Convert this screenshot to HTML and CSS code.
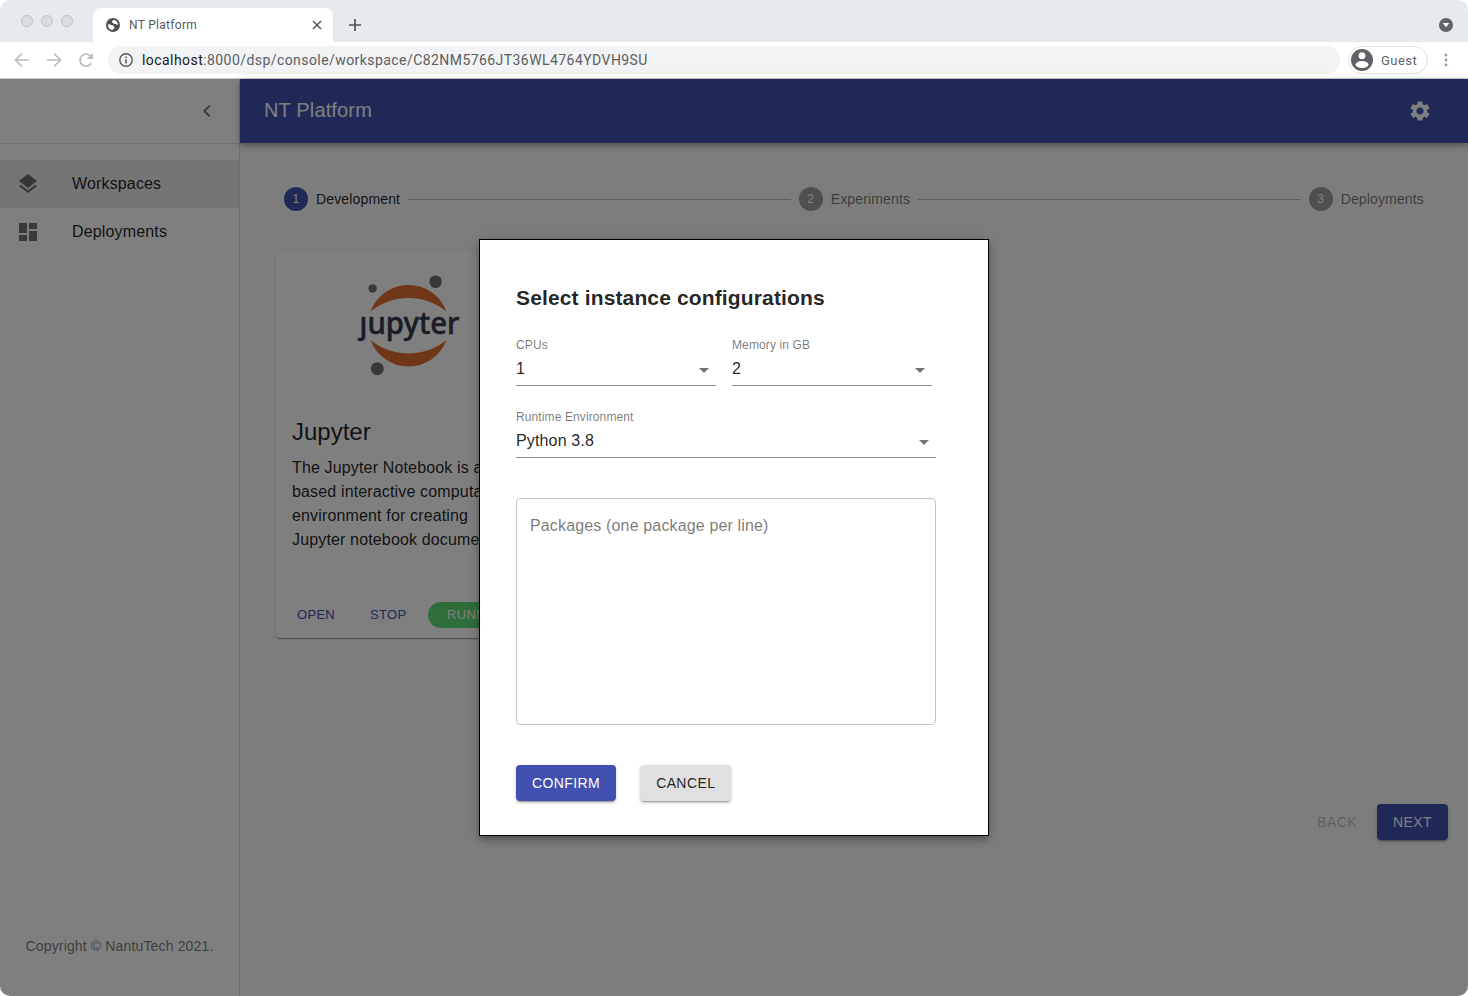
FILE: index.html
```html
<!DOCTYPE html>
<html lang="en">
<head>
<meta charset="utf-8">
<title>NT Platform</title>
<link rel="stylesheet" href="styles.css">
</head>
<body>
<div class="window">
  <div class="tabstrip">
    <div class="lights"><i></i><i></i><i></i></div>
    <div class="tab">
      <svg class="globe" viewBox="0 0 14 14"><circle cx="7" cy="7" r="7" fill="#4b4e52"/><path d="M2.100 6.300C4.600 5.700 5 7.500 6.700 7.300S7 9.200 8.300 9.300 7.600 11 6.600 11.900C4 12.200 1.800 9.800 2.100 6.300zM7.400 2C6.500 3 5.300 3.700 6.300 4.600S8 6.200 9.500 6.100 10.600 7 12 6.900C12 4.600 10.400 2 7.400 2z" fill="#fff"/></svg>
      <span class="tab-title">NT Platform</span>
      <svg class="close" viewBox="0 0 10 10"><path d="M1 1l8 8M9 1L1 9" stroke="#505357" stroke-width="1.500"/></svg>
    </div>
    <svg class="plus" viewBox="0 0 12 12"><path d="M6 0v12M0 6h12" stroke="#4f5256" stroke-width="1.700"/></svg>
    <svg class="tab-menu" viewBox="0 0 14 14"><circle cx="7" cy="7" r="7" fill="#5f6368"/><path d="M3.700 5.100h6.600L7 9.300z" fill="#fff"/></svg>
  </div>
  <div class="toolbar">
    <svg class="nav" viewBox="0 0 16 16"><path d="M15 8H2M8 1.500L1.500 8 8 14.500" fill="none" stroke="#b9bbbe" stroke-width="1.700"/></svg>
    <svg class="nav" viewBox="0 0 16 16"><path d="M1 8h13M8 1.500L14.500 8 8 14.500" fill="none" stroke="#b9bbbe" stroke-width="1.700"/></svg>
    <svg class="nav" viewBox="0 0 16 16"><path d="M13.300 11.300A6.100 6.100 0 1 1 12.600 4" fill="none" stroke="#b9bbbe" stroke-width="1.700"/><path d="M14.900 1v6.100H8.800z" fill="#b9bbbe"/></svg>
    <div class="address">
      <svg class="info" viewBox="0 0 14 14"><circle cx="7" cy="7" r="6.200" fill="none" stroke="#55585c" stroke-width="1.400"/><path d="M7 6.200v4.200M7 3.500v1.500" stroke="#55585c" stroke-width="1.500"/></svg>
      <span class="url"><b>localhost</b>:8000/dsp/console/workspace/C82NM5766JT36WL4764YDVH9SU</span>
    </div>
    <div class="guest">
      <svg class="avatar" viewBox="0 0 22 22"><circle cx="11" cy="11" r="11" fill="#5f6368"/><circle cx="11" cy="6.700" r="3.400" fill="#fff"/><ellipse cx="11" cy="15.600" rx="6.500" ry="3.500" fill="#fff"/></svg>
      <span>Guest</span>
    </div>
    <svg class="dots" viewBox="0 0 4 14"><g fill="#96999c"><circle cx="2" cy="2" r="1.400"/><circle cx="2" cy="7" r="1.400"/><circle cx="2" cy="12" r="1.400"/></g></svg>
  </div>

  <div class="page">
    <aside class="drawer">
      <div class="drawer-head"><svg class="icon" viewBox="0 0 24 24"><path d="M15.410 7.410L14 6l-6 6 6 6 1.410-1.410L10.830 12z"/></svg></div>
      <nav class="menu">
        <a class="item selected"><svg class="icon" viewBox="0 0 24 24"><path d="M11.990 18.540l-7.370-5.730L3 14.070l9 7 9-7-1.630-1.270-7.380 5.740zM12 16l7.360-5.730L21 9l-9-7-9 7 1.630 1.270L12 16z"/></svg><span>Workspaces</span></a>
        <a class="item"><svg class="icon" viewBox="0 0 24 24"><path d="M3 13h8V3H3v10zm0 8h8v-6H3v6zm10 0h8V11h-8v10zm0-18v6h8V3h-8z"/></svg><span>Deployments</span></a>
      </nav>
      <p class="copyright">Copyright © NantuTech 2021.</p>
    </aside>
    <div class="main">
      <header class="appbar">
        <h1>NT Platform</h1>
        <svg class="icon" viewBox="0 0 24 24"><path d="M19.140 12.940c.04-.3.060-.61.060-.94 0-.32-.02-.64-.07-.94l2.030-1.580c.18-.14.230-.41.120-.61l-1.920-3.320c-.12-.22-.37-.29-.59-.22l-2.390.96c-.5-.38-1.030-.7-1.620-.94l-.36-2.540c-.04-.24-.24-.41-.48-.41h-3.840c-.24 0-.43.170-.47.410l-.36 2.540c-.59.240-1.130.570-1.620.940l-2.390-.96c-.22-.08-.47 0-.59.220L2.740 8.870c-.12.210-.08.470.120.610l2.030 1.580c-.05.300-.09.630-.09.940s.02.640.070.940l-2.030 1.580c-.18.140-.23.410-.12.610l1.920 3.320c.12.220.370.290.590.220l2.390-.96c.5.380 1.030.700 1.620.940l.36 2.540c.05.240.240.410.480.410h3.840c.24 0 .44-.17.470-.41l.36-2.540c.59-.24 1.130-.56 1.620-.94l2.390.96c.22.080.470 0 .590-.22l1.920-3.320c.12-.22.070-.47-.12-.61l-2.010-1.580zM12 15.600c-1.980 0-3.600-1.620-3.600-3.600s1.620-3.600 3.600-3.600 3.600 1.620 3.600 3.600-1.620 3.600-3.600 3.600z"/></svg>
      </header>
      <div class="stepper">
        <div class="step active"><i>1</i><span>Development</span></div>
        <div class="line"></div>
        <div class="step"><i>2</i><span>Experiments</span></div>
        <div class="line"></div>
        <div class="step"><i>3</i><span>Deployments</span></div>
      </div>
      <article class="card">
        <svg class="logo" viewBox="0 0 110 110" role="img" aria-label="jupyter">
          <path d="M17.500 41.500A40.500 40.500 0 0 1 93.500 41.500A60 60 0 0 0 17.500 41.500zM17.500 70A40.500 40.500 0 0 0 93.500 70A60 60 0 0 1 17.500 70z" fill="#df6d30"/>
          <g fill="#757070"><circle cx="19.600" cy="18.500" r="4.200"/><circle cx="82.600" cy="11.700" r="6.300"/><circle cx="24.300" cy="98.700" r="6.500"/></g>
          <text x="6.500" y="63.500" textLength="100" lengthAdjust="spacingAndGlyphs">ȷupyter</text>
        </svg>
        <h2>Jupyter</h2>
        <p>The Jupyter Notebook is a web-<br>based interactive computational<br>environment for creating<br>Jupyter notebook documents.</p>
        <div class="card-actions"><button class="link open">OPEN</button><button class="link stop">STOP</button><span class="chip">RUNNING</span></div>
      </article>
      <div class="pager"><button class="btn back">BACK</button><button class="btn primary">NEXT</button></div>
    </div>

    <div class="overlay">
      <section class="dialog">
        <h2>Select instance configurations</h2>
        <div class="row">
          <div class="field"><label>CPUs</label><div class="select"><span>1</span><svg class="icon" viewBox="0 0 24 24"><path d="M7 10l5 5 5-5z"/></svg></div></div>
          <div class="field"><label>Memory in GB</label><div class="select"><span>2</span><svg class="icon" viewBox="0 0 24 24"><path d="M7 10l5 5 5-5z"/></svg></div></div>
        </div>
        <div class="field wide"><label>Runtime Environment</label><div class="select"><span>Python 3.8</span><svg class="icon" viewBox="0 0 24 24"><path d="M7 10l5 5 5-5z"/></svg></div></div>
        <div class="packages">Packages (one package per line)</div>
        <div class="actions"><button class="btn primary">CONFIRM</button><button class="btn neutral">CANCEL</button></div>
      </section>
    </div>
  </div>
</div>
</body>
</html>
```

FILE: styles.css
```css
* { box-sizing: border-box; }
body { margin: 0; background: #fff; font-family: "Liberation Sans", Arial, sans-serif; color: rgba(0,0,0,.87); }
h1, h2, p { margin: 0; font-weight: 400; }
button { font: inherit; border: 0; background: none; padding: 0; }
svg { display: block; flex: none; }
.icon { width: 24px; height: 24px; fill: rgba(0,0,0,.54); }

.window { width: 1468px; height: 996px; display: flex; flex-direction: column; border-radius: 10px; overflow: hidden; }

/* Browser chrome */
.tabstrip { height: 42px; flex: none; background: #e7eaed; display: flex; padding-left: 21px; font-family: Roboto, sans-serif; }
.lights { display: flex; gap: 8px; padding-top: 15px; width: 72px; }
.lights i { width: 12px; height: 12px; border-radius: 50%; background: #dadbdc; border: 1px solid #c2c3c4; }
.tab { width: 240px; margin-top: 8px; height: 34px; background: #fff; border-radius: 8px 8px 0 0; display: flex; align-items: center; padding: 0 11px 0 13px; }
.globe { width: 14px; height: 14px; }
.tab-title { font-size: 12px; letter-spacing: .3px; color: #56595d; margin-left: 9px; flex: 1; }
.close { width: 10px; height: 10px; }
.plus { width: 12px; height: 12px; margin: 19px 0 0 16px; }
.tab-menu { width: 14px; height: 14px; margin: 18px 15px 0 auto; }
.toolbar { height: 37px; flex: none; background: #fff; border-bottom: 1px solid #c9cacb; display: flex; align-items: center; padding-left: 14px; font-family: Roboto, sans-serif; }
.nav { width: 16px; height: 16px; margin-right: 16px; }
.address { width: 1232px; height: 28px; margin-left: -2px; border-radius: 14px; background: #f1f3f4; display: flex; align-items: center; padding-left: 11px; }
.info { width: 14px; height: 14px; margin-right: 9px; }
.url { font-size: 14px; letter-spacing: .435px; color: #5b5e62; white-space: nowrap; }
.url b { font-weight: 400; color: #202124; }
.guest { width: 80px; height: 28px; margin-left: 8px; border: 1px solid #dfe1e4; border-radius: 14px; display: flex; align-items: center; padding-left: 2px; font-size: 13px; letter-spacing: .45px; color: #5f6368; }
.avatar { width: 22px; height: 22px; margin-right: 8px; }
.dots { width: 4px; height: 14px; margin-left: 16px; }

/* Application */
.page { flex: 1; display: flex; position: relative; background: #fafafa; }
.drawer { width: 240px; background: #fff; border-right: 1px solid #e0e0e0; display: flex; flex-direction: column; }
.drawer-head { height: 65px; border-bottom: 1px solid #e0e0e0; display: flex; align-items: center; justify-content: flex-end; padding-right: 20px; }
.menu { padding-top: 16px; }
.item { height: 48px; display: flex; align-items: center; padding-left: 16px; font-size: 16px; letter-spacing: .00938em; }
.item span { margin-left: 32px; }
.selected { background: rgba(0,0,0,.08); }
.copyright { margin: auto 0 40px; text-align: center; font-size: 14px; line-height: 20px; letter-spacing: .01071em; color: rgba(0,0,0,.54); }
.main { flex: 1; display: flex; flex-direction: column; }
.appbar { height: 64px; background: #4150af; color: #fff; display: flex; align-items: center; justify-content: space-between; padding: 0 36px 0 24px; box-shadow: 0 2px 4px -1px rgba(0,0,0,.2), 0 4px 5px rgba(0,0,0,.14), 0 1px 10px rgba(0,0,0,.12); }
.appbar h1 { font-size: 20px; letter-spacing: .0075em; padding-bottom: 2px; }
.appbar .icon { fill: #fff; }
.stepper { display: flex; align-items: center; gap: 8px; margin: 44px 44px 0; height: 24px; font-size: 14px; letter-spacing: .01071em; }
.step { display: flex; align-items: center; gap: 8px; color: rgba(0,0,0,.54); }
.step i { width: 24px; height: 24px; border-radius: 50%; background: #9e9e9e; color: #fff; font-style: normal; font-size: 12px; text-align: center; line-height: 24px; }
.active { color: rgba(0,0,0,.87); }
.active i { background: #4150af; }
.line { flex: 1; height: 1px; background: #bdbdbd; }
.card { width: 266px; height: 387px; margin: 40px 0 0 36px; background: #fff; border-radius: 4px; box-shadow: 0 2px 1px -1px rgba(0,0,0,.2), 0 1px 1px rgba(0,0,0,.14), 0 1px 3px rgba(0,0,0,.12); padding: 19px 0 0 16px; white-space: nowrap; }
.logo { width: 110px; height: 110px; margin-left: 61px; }
.logo text { font: 500 30px "Noto Sans", "Open Sans", sans-serif; fill: #343a4b; stroke: #343a4b; stroke-width: .5px; }
.card h2 { font-size: 24px; line-height: 32px; margin-top: 36px; }
.card p { font-size: 16px; line-height: 24px; letter-spacing: .00938em; margin-top: 8px; }
.card-actions { display: flex; align-items: center; margin-top: 50px; font-size: 13px; letter-spacing: .02857em; height: 26px; }
.link { color: #4150af; width: 38px; margin-left: 5px; text-align: left; letter-spacing: .3px; padding-bottom: 2px; }
.stop { margin-left: 35px; }
.chip { width: 96px; height: 26px; border-radius: 13px; background: #5cdd77; color: #fff; line-height: 26px; padding-left: 19px; margin-left: 20px; }
.pager { display: flex; justify-content: flex-end; margin: auto 20px 156px; }
.btn { height: 36px; border-radius: 4px; padding: 0 16px; font-size: 14px; letter-spacing: .02857em; }
.primary, .neutral { box-shadow: 0 3px 1px -2px rgba(0,0,0,.2), 0 2px 2px rgba(0,0,0,.14), 0 1px 5px rgba(0,0,0,.12); }
.primary { background: #4150af; color: #fff; }
.neutral { background: #e0e0e0; color: rgba(0,0,0,.87); }
.back { color: rgba(0,0,0,.26); padding: 0 20px; }

/* Modal */
.overlay { position: absolute; inset: 0; background: rgba(0,0,0,.5); display: flex; align-items: center; justify-content: center; }
.dialog { width: 510px; height: 597px; background: #fff; border: 1px solid #000; padding: 46px 36px 0; box-shadow: 0 3px 5px -1px rgba(0,0,0,.2), 0 5px 8px rgba(0,0,0,.14), 0 1px 14px rgba(0,0,0,.12); }
.dialog h2 { font-size: 21px; font-weight: 700; line-height: 24px; letter-spacing: .14px; white-space: nowrap; }
.row { display: flex; gap: 16px; margin: 28px 0 24px; }
.field { width: 200px; height: 48px; display: flex; flex-direction: column; }
.wide { width: 420px; }
.field label { font-size: 12px; line-height: 14px; height: 16px; color: rgba(0,0,0,.54); letter-spacing: .00938em; }
.select { height: 32px; border-bottom: 1px solid #8c8c8c; display: flex; justify-content: space-between; font-size: 16px; letter-spacing: .00938em; }
.select span { line-height: 30px; }
.select .icon { margin-top: 4px; }
.packages { width: 420px; height: 227px; margin-top: 40px; border: 1px solid #c4c4c4; border-radius: 4px; padding: 17px 13px; font-size: 16px; line-height: 20px; letter-spacing: .00938em; color: rgba(0,0,0,.54); }
.actions { display: flex; gap: 24px; margin-top: 40px; }
```
